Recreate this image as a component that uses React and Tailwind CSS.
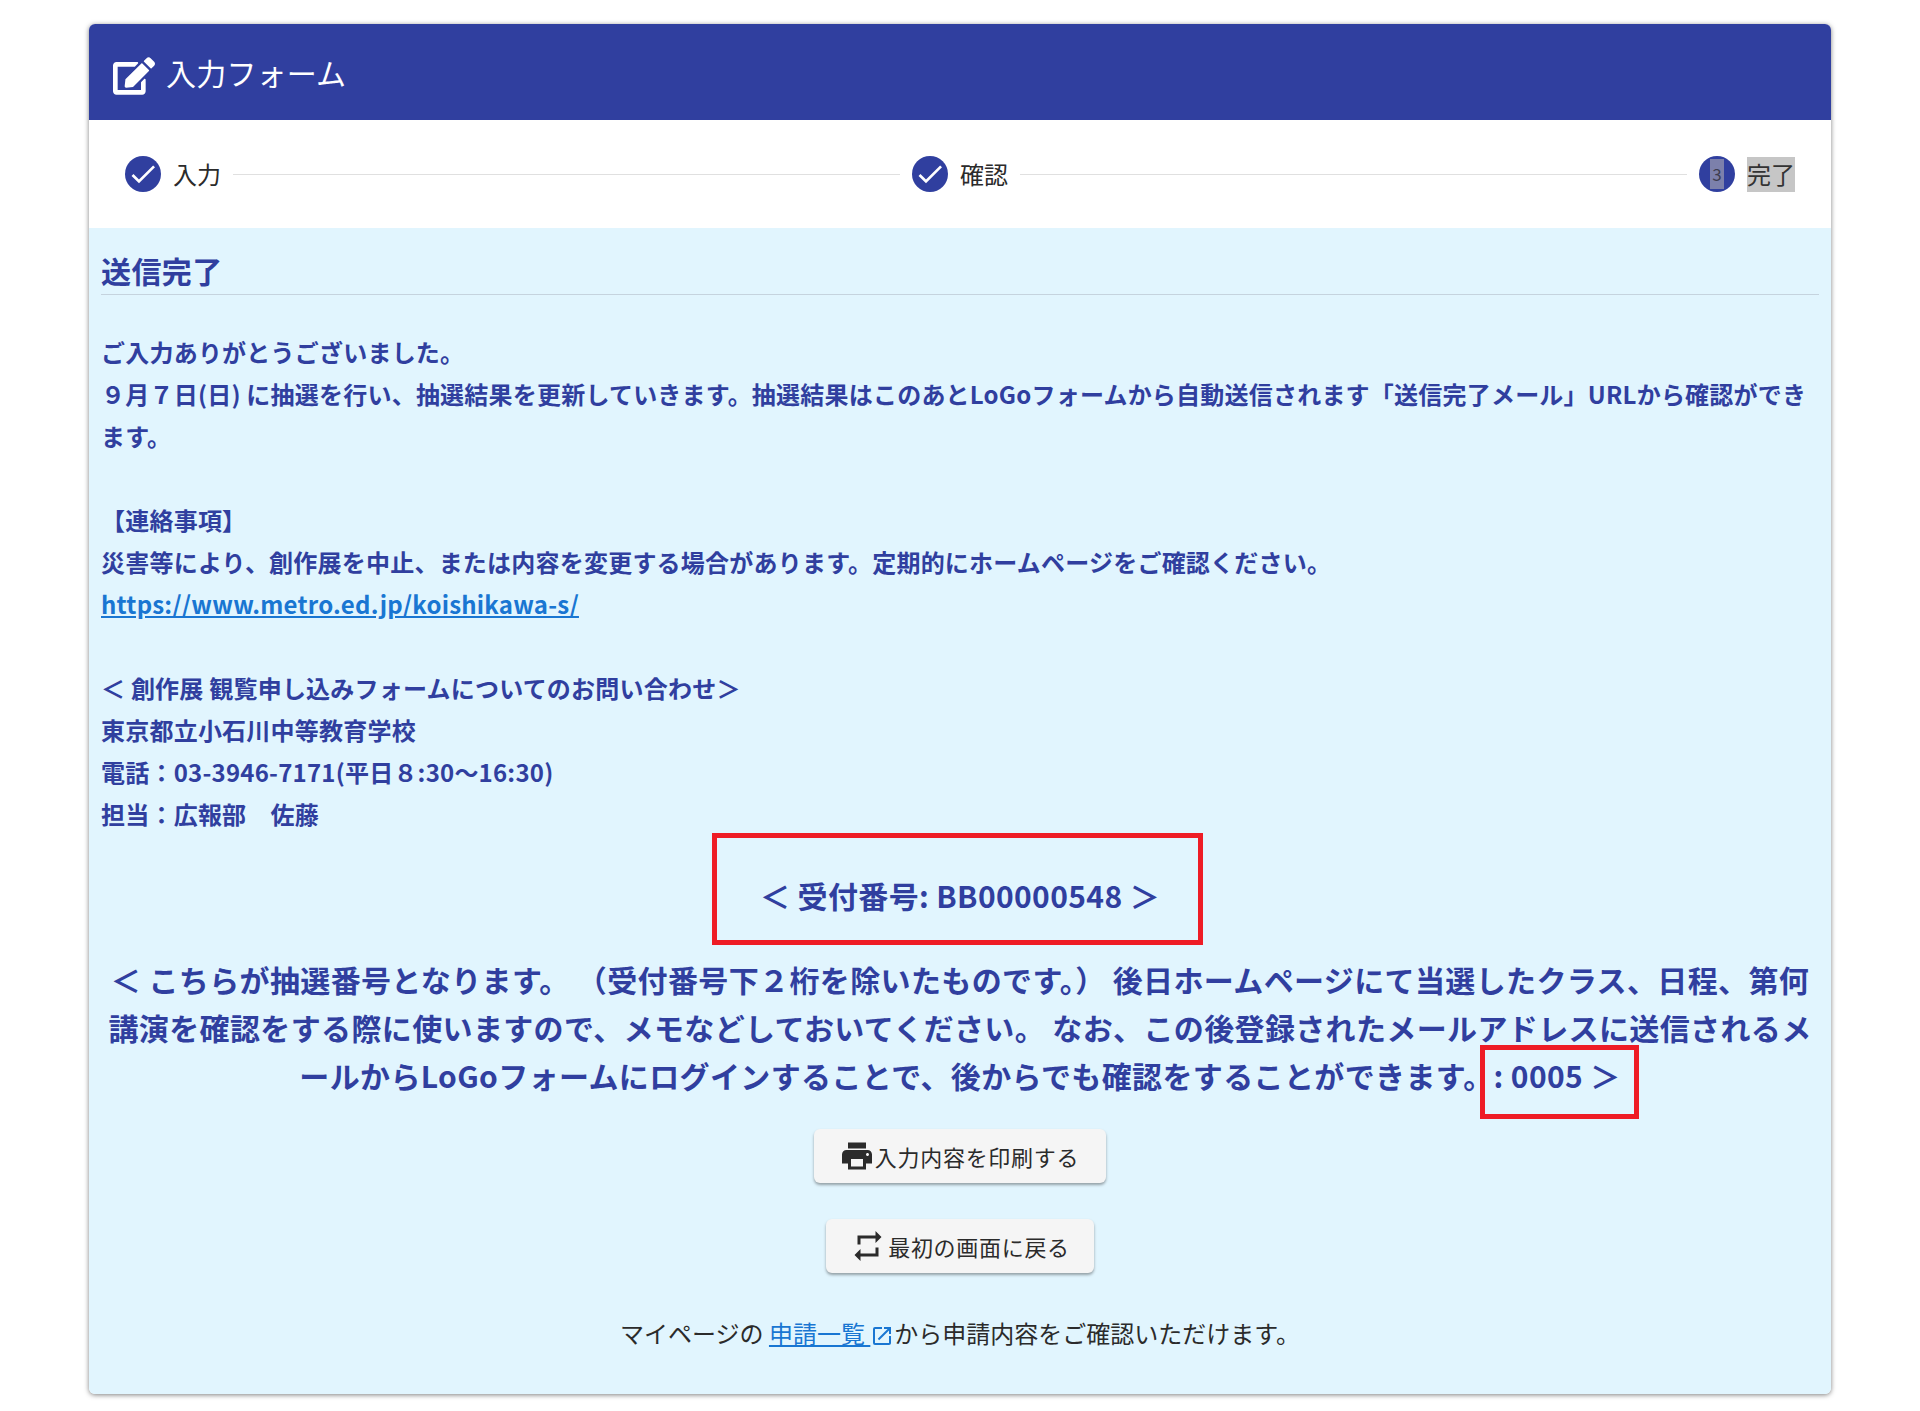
import React from 'react';
import { FaEdit } from 'react-icons/fa';
import { MdCheck, MdLocalPrintshop, MdRepeat, MdOpenInNew } from 'react-icons/md';

const StepDone = ({ label }) => (
  <div className="flex items-center gap-3 shrink-0">
    <div className="w-9 h-9 rounded-full bg-[#303f9f] flex items-center justify-center text-white">
      <MdCheck className="w-8 h-8" />
    </div>
    <span className="text-[24px] leading-[36px] text-[#2b2b2b]">{label}</span>
  </div>
);

const Connector = () => <div className="flex-1 mx-3 h-px bg-[#e0e0e0]" />;

const App = () => {
  return (
    <div className="relative h-[1411px] bg-white pt-6 px-[89px] font-['Noto_Sans_CJK_JP',sans-serif] overflow-hidden">
      <div className="rounded-md shadow-[0_1px_5px_rgba(0,0,0,0.5)] overflow-hidden h-[1370px] flex flex-col">
        {/* Header */}
        <div className="h-24 shrink-0 bg-[#303f9f] flex items-center pl-6 gap-[11px] text-white">
          <FaEdit className="w-[42px] h-[38px] mt-2" />
          <span className="text-[30px] tracking-[0.2px]">入力フォーム</span>
        </div>

        {/* Stepper */}
        <div className="h-[108px] shrink-0 bg-white flex items-center px-9">
          <StepDone label="入力" />
          <Connector />
          <StepDone label="確認" />
          <Connector />
          <div className="flex items-center gap-3 shrink-0">
            <div className="w-9 h-9 rounded-full bg-[#303f9f] flex items-center justify-center">
              <span className="w-[14px] h-[30px] bg-[#7c80ab] text-[#3d3d50] text-[17px] leading-[30px] text-center">3</span>
            </div>
            <span className="text-[24px] leading-[34px] pb-px text-[#333] bg-[#c6c6c6]">完了</span>
          </div>
        </div>

        {/* Content */}
        <div className="flex-1 bg-[#e1f5fe] px-3 text-[#303f9f]">
          <h2 className="h-[67px] pt-[24px] border-b border-[#c5d3de] text-[30px] leading-[36px] font-bold tracking-[0.4px]">送信完了</h2>

          <div className="mt-[36px] text-[24px] leading-[42px] font-bold tracking-[0.22px]">
            <p>ご入力ありがとうございました。</p>
            <p>９月７日(日) に抽選を行い、抽選結果を更新していきます。抽選結果はこのあとLoGoフォームから自動送信されます「送信完了メール」URLから確認ができます。</p>
            <p>&nbsp;</p>
            <p>【連絡事項】</p>
            <p>災害等により、創作展を中止、または内容を変更する場合があります。定期的にホームページをご確認ください。</p>
            <p><a href="#" className="text-[#1976d2] underline">https://www.metro.ed.jp/koishikawa-s/</a></p>
            <p>&nbsp;</p>
            <p>＜ 創作展 観覧申し込みフォームについてのお問い合わせ＞</p>
            <p>東京都立小石川中等教育学校</p>
            <p>電話：03-3946-7171(平日８:30～16:30)</p>
            <p>担当：広報部　佐藤</p>
          </div>

          <div className="mt-[36px] text-center text-[30px] leading-[48px] font-bold tracking-[0.37px]">
            <p>＜ 受付番号: BB00000548 ＞</p>
            <p className="mt-9">＜ こちらが抽選番号となります。 （受付番号下２桁を除いたものです。） 後日ホームページにて当選したクラス、日程、第何講演を確認をする際に使いますので、メモなどしておいてください。 なお、この後登録されたメールアドレスに送信されるメールからLoGoフォームにログインすることで、後からでも確認をすることができます。: 0005 ＞</p>
          </div>

          <div className="mt-[30px] flex flex-col items-center gap-9 text-[#2b2b2b]">
            <button className="w-[292px] h-[54px] rounded-md bg-[#f5f5f5] shadow-[0_2px_3px_rgba(0,0,0,0.35)] flex items-center justify-center text-[22px] tracking-[0.7px]">
              <MdLocalPrintshop className="w-9 h-9 -ml-0.5" />
              <span>入力内容を印刷する</span>
            </button>
            <button className="w-[268px] h-[54px] rounded-md bg-[#f5f5f5] shadow-[0_2px_3px_rgba(0,0,0,0.35)] flex items-center justify-center gap-0.5 text-[22px] tracking-[0.7px]">
              <MdRepeat className="w-9 h-9" />
              <span>最初の画面に戻る</span>
            </button>
          </div>

          <p className="mt-[40px] text-center text-[24px] leading-[40px] text-[#2b2b2b]">
            マイページの <a href="#" className="text-[#1976d2] underline">申請一覧 </a>
            <MdOpenInNew className="inline w-6 h-6 text-[#1976d2] align-[-5px]" />
            から申請内容をご確認いただけます。
          </p>
        </div>
      </div>

      {/* Red annotation boxes */}
      <div className="absolute left-[712px] top-[833px] w-[491px] h-[112px] border-[5px] border-[#ee1c25]" />
      <div className="absolute left-[1480px] top-[1045px] w-[159px] h-[74px] border-[5px] border-[#ee1c25]" />
    </div>
  );
};

export default App;
